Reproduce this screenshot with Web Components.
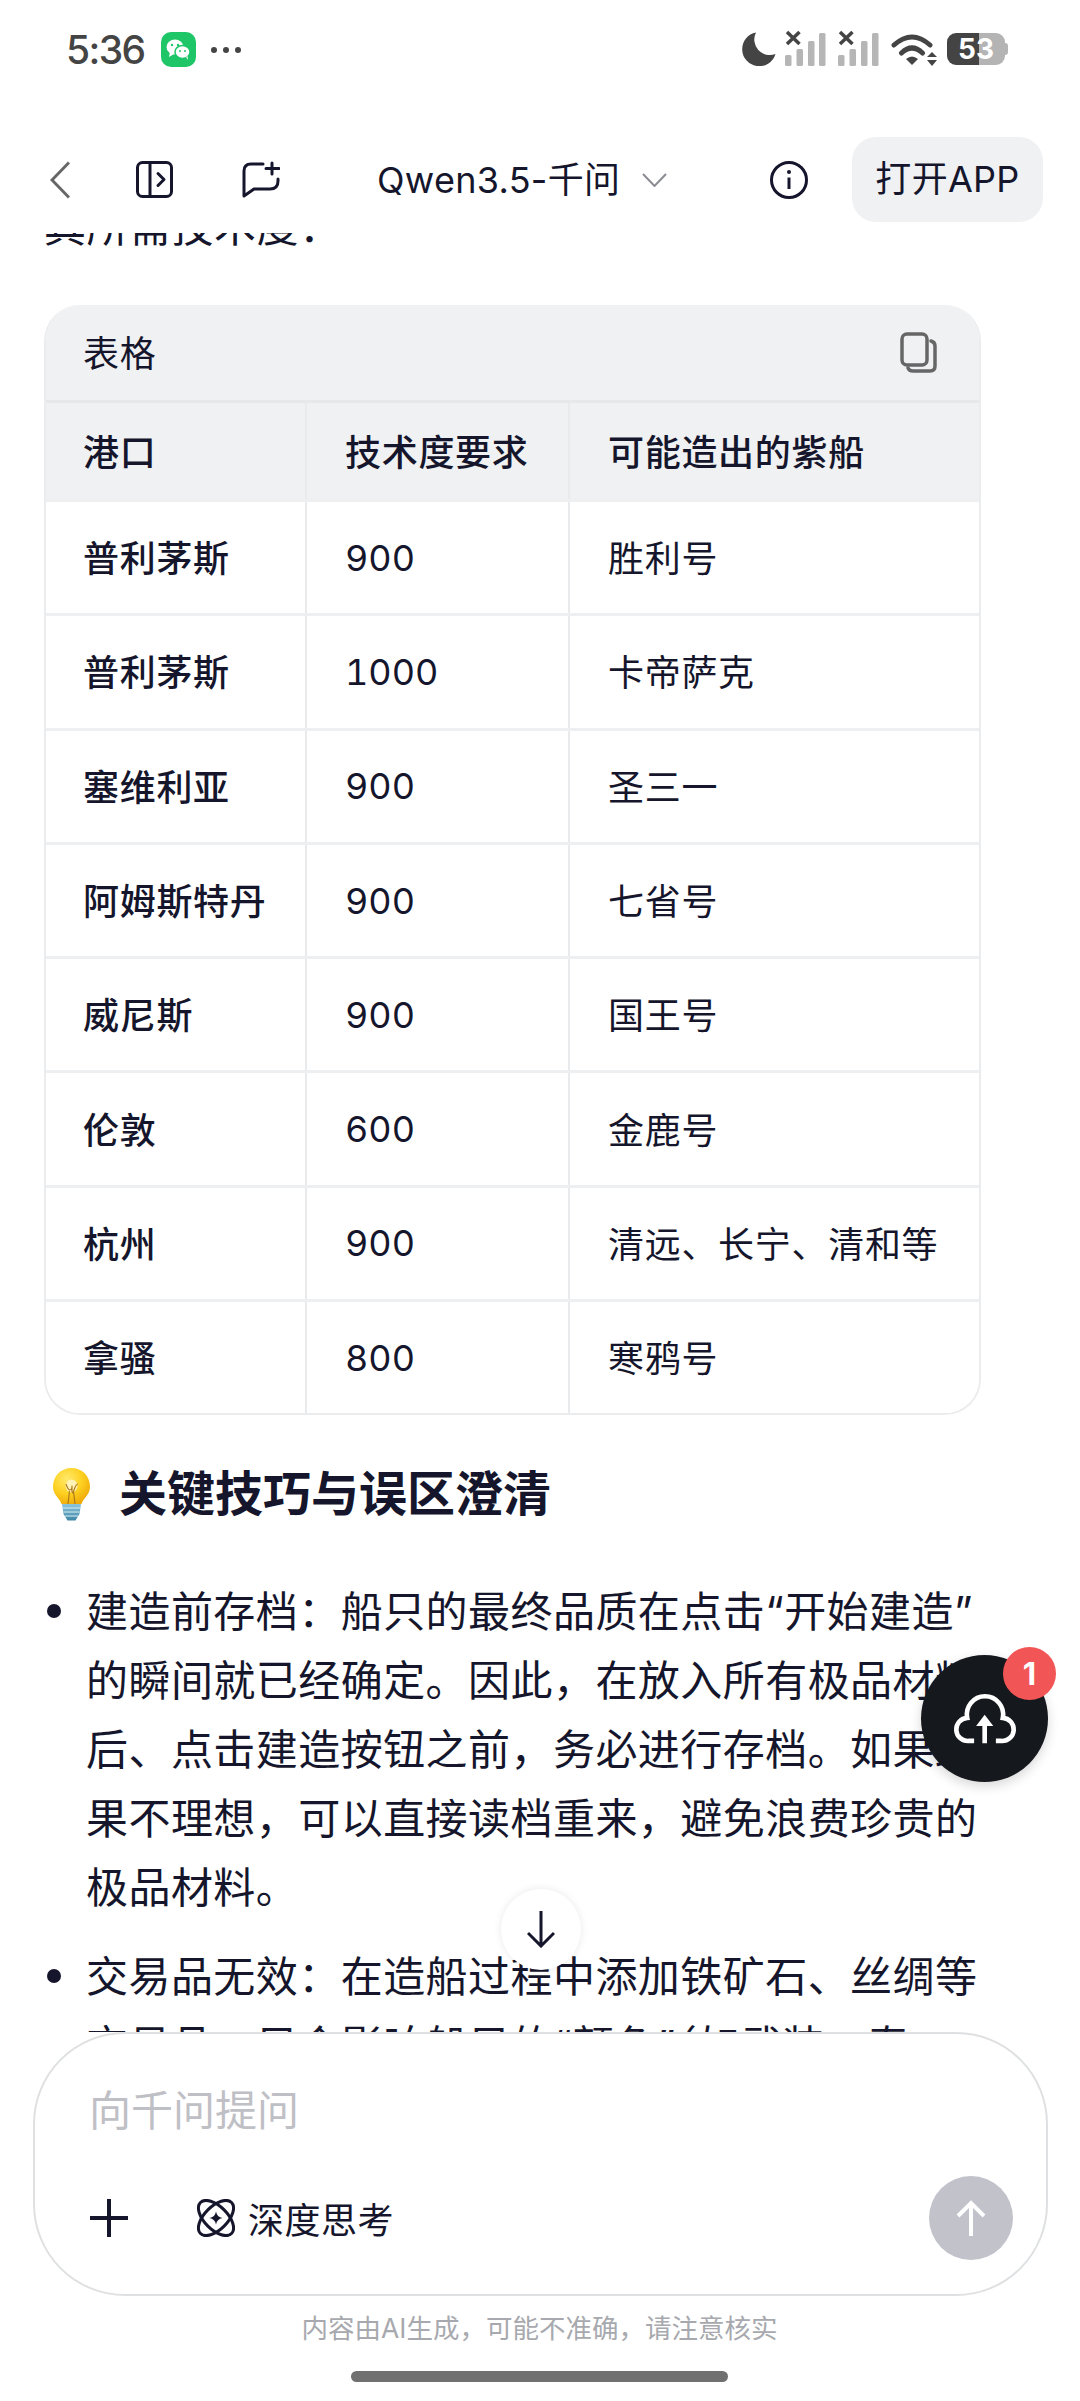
<!DOCTYPE html>
<html lang="zh-CN"><head><meta charset="utf-8"><title>Qwen3.5-千问</title>
<style>
html,body{margin:0;padding:0;background:#fff}
body{width:1080px;height:2401px;overflow:hidden;font-family:Inter,"Noto Sans CJK SC","Noto Sans",sans-serif;color:#15162c}
</style></head><body>
<app-shell>
  <status-bar></status-bar>
  <app-nav title-text="Qwen3.5-千问" action="打开APP"></app-nav>
  <chat-view>
    <chat-para>其所需技术度：</chat-para>
    <ship-table caption="表格">
      <ship-row head port="港口" tech="技术度要求" ship="可能造出的紫船"></ship-row>
      <ship-row port="普利茅斯" tech="900" ship="胜利号"></ship-row>
      <ship-row port="普利茅斯" tech="1000" ship="卡帝萨克"></ship-row>
      <ship-row port="塞维利亚" tech="900" ship="圣三一"></ship-row>
      <ship-row port="阿姆斯特丹" tech="900" ship="七省号"></ship-row>
      <ship-row port="威尼斯" tech="900" ship="国王号"></ship-row>
      <ship-row port="伦敦" tech="600" ship="金鹿号"></ship-row>
      <ship-row port="杭州" tech="900" ship="清远、长宁、清和等"></ship-row>
      <ship-row last port="拿骚" tech="800" ship="寒鸦号"></ship-row>
    </ship-table>
    <tip-heading>关键技巧与误区澄清</tip-heading>
    <tip-item>建造前存档：船只的最终品质在点击“开始建造”的瞬间就已经确定。因此，在放入所有极品材料后、点击建造按钮之前，务必进行存档。如果结果不理想，可以直接读档重来，避免浪费珍贵的极品材料。</tip-item>
    <tip-item>交易品无效：在造船过程中添加铁矿石、丝绸等交易品，只会影响船只的“颜色”（如武装、寿</tip-item>
  </chat-view>
  <composer-box placeholder="向千问提问" mode="深度思考" note="内容由AI生成，可能不准确，请注意核实"></composer-box>
  <scroll-down></scroll-down>
  <upload-fab count="1"></upload-fab>
</app-shell>
<script>
function el(name, html){
  customElements.define(name, class extends HTMLElement{
    connectedCallback(){
      if(this.shadowRoot) return;
      const a = n => this.getAttribute(n) ?? '';
      this.attachShadow({mode:'open'}).innerHTML = html(a, n => this.hasAttribute(n));
    }
  });
}
el('app-shell', () => `<style>:host{display:flex;flex-direction:column;position:relative;width:1080px;height:2401px;overflow:hidden;background:#fff}</style><slot></slot>`);

el('status-bar', () => `<style>
:host{display:flex;flex:none;height:100px;box-sizing:border-box;padding:30px 75px 0 66px;justify-content:space-between;align-items:flex-start}
.l,.r{display:flex;align-items:flex-start}
.t{font:500 39px/40px Inter,"Noto Sans",sans-serif;color:#444;height:40px;letter-spacing:-1.6px;width:80px}
.wx{margin:2px 0 0 15px;width:35px;height:35px;border-radius:10px;background:#1ec668;display:block}
.dots{margin:16px 0 0 14px;display:block}
svg{display:block}
.moon{margin:2px 0 0}.s1{margin:0 0 0 9px}.s2{margin:0 0 0 12px}.w{margin:4px 0 0 12px}
.bat{margin:3px 0 0 10px;position:relative;width:58px;height:32px;border-radius:9px;background:linear-gradient(90deg,#444 32px,#b4b4b4 32px);display:flex;align-items:center;justify-content:center;color:#fff;font:700 28px/32px Inter,sans-serif}
.bat i{position:absolute;left:58px;top:10px;width:3px;height:12px;border-radius:0 3px 3px 0;background:#b4b4b4}
</style>
<div class="l"><div class="t">5:36</div>
<svg class="wx" viewBox="0 0 35 35"><ellipse cx="14" cy="15" rx="8.500" ry="7.500" fill="#fff"/><path d="M9 20l-1 5 5-3z" fill="#fff"/><ellipse cx="21.500" cy="20" rx="7.500" ry="6.500" fill="#fff" stroke="#1ec668" stroke-width="1.500"/><path d="M25 25l2 3-.5-4z" fill="#fff"/><circle cx="11" cy="13" r="1.200" fill="#1ec668"/><circle cx="17" cy="13" r="1.200" fill="#1ec668"/><circle cx="19" cy="19" r="1" fill="#1ec668"/><circle cx="24" cy="19" r="1" fill="#1ec668"/></svg>
<svg class="dots" width="32" height="8" viewBox="0 0 32 8"><circle cx="4" cy="4" r="3" fill="#444"/><circle cx="16" cy="4" r="3" fill="#444"/><circle cx="28" cy="4" r="3" fill="#444"/></svg></div>
<div class="r">
<svg class="moon" width="34" height="34" viewBox="0 0 34 34"><path d="M14 .5A17 17 0 1 0 33.500 22 15.500 15.500 0 0 1 14 .5Z" fill="#444"/></svg>
${[1,2].map(i=>`<svg class="s${i}" width="41" height="36" viewBox="0 0 41 36"><path d="M1.500 1.500 14 13.500M14 1.500 1.500 13.500" transform="translate(.5 .5)" stroke="#444" stroke-width="3.500" fill="none"/><g fill="#b6b6b6"><rect x="0" y="25" width="6.500" height="11" rx="1.500"/><rect x="11.500" y="19" width="6.500" height="17" rx="1.500"/><rect x="23" y="11" width="6.500" height="25" rx="1.500"/><rect x="34" y="3" width="6.500" height="33" rx="1.500"/></g></svg>`).join('')}
<svg class="w" width="46" height="33" viewBox="0 0 46 33"><path d="M3 11Q21 -5 39 11M10.500 19Q21 9 31.500 19" fill="none" stroke="#444" stroke-width="5" stroke-linecap="round"/><path d="M15 25Q21 20 27 25L21 31Z" fill="#444"/><path d="M36 23 41 18 46 23ZM36 26H46L41 32Z" fill="#444"/></svg>
<div class="bat">53<i></i></div>
</div>`);

el('app-nav', a => `<style>
:host{display:flex;flex:none;height:133px;box-sizing:border-box;padding:37px 37px 0 50px;align-items:flex-start;color:#15162c;background:#fff;position:relative;z-index:1}
svg{display:block;fill:none;flex:none}
.c{display:flex;align-items:center;height:85px}
.title{font:400 36px/85px Inter,"Noto Sans CJK SC",sans-serif;margin-left:97px;padding-top:1px;white-space:nowrap;color:#15162c;letter-spacing:.3px}
.btn{margin-left:auto;width:191px;height:85px;border-radius:24px;background:#f0f1f3;font:400 36px/85px Inter,"Noto Sans CJK SC",sans-serif;text-align:center;color:#15162c;letter-spacing:.3px}
</style>
<div class="c"><svg width="20" height="38" viewBox="0 0 20 38"><path d="M19 1.500 2 19 19 36.500" stroke="#666" stroke-width="3"/></svg></div>
<div class="c" style="margin-left:66px"><svg width="37" height="37" viewBox="0 0 37 37"><rect x="1.500" y="1.500" width="34" height="34" rx="5" stroke="#15162c" stroke-width="3"/><path d="M14 2V35" stroke="#15162c" stroke-width="3"/><path d="M22 12.500l6 6-6 6" stroke="#15162c" stroke-width="3" stroke-linecap="round" stroke-linejoin="round"/></svg></div>
<div class="c" style="margin-left:69px"><svg width="38" height="37" viewBox="0 0 38 37"><path d="M21 3H9Q2 3 2 10V35L12 28H28Q36 28 36 20V18" stroke="#15162c" stroke-width="3" stroke-linecap="round" stroke-linejoin="round"/><path d="M30 2V13M24 7.500H37" stroke="#15162c" stroke-width="3" stroke-linecap="round"/></svg></div>
<div class="title">${a('title-text')}</div>
<div class="c" style="margin-left:22px"><svg width="25" height="14" viewBox="0 0 25 14"><path d="M1 1 12.500 13 24 1" stroke="#8b8c93" stroke-width="2"/></svg></div>
<div class="c" style="margin-left:103px"><svg width="38" height="38" viewBox="0 0 38 38"><circle cx="19" cy="19" r="17.500" stroke="#15162c" stroke-width="3"/><path d="M19 16.500V28" stroke="#15162c" stroke-width="3"/><circle cx="19" cy="11" r="2" fill="#15162c"/></svg></div>
<div class="btn">${a('action')}</div>`);

el('chat-view', () => `<style>:host{display:block;flex:none;height:1799px;overflow:hidden;box-sizing:border-box;padding:0 99px 0 44px}
.inner{margin-top:-41px}</style><div class="inner"><slot></slot></div>`);

el('chat-para', () => `<style>:host{display:block;font:400 42px/69px Inter,"Noto Sans CJK SC",sans-serif;letter-spacing:.5px;margin:0 0 44px}</style><slot></slot>`);

el('ship-table', a => `<style>
:host{display:block;box-sizing:border-box;width:937px;border:2px solid #ebecee;border-top:0;border-radius:36px;overflow:hidden;font-family:Inter,"Noto Sans CJK SC",sans-serif;letter-spacing:.7px}
.cap{display:flex;justify-content:space-between;align-items:center;height:98px;box-sizing:border-box;padding:0 42px 0 37px;background:#f0f1f3;font-size:36px;border-bottom:3px solid #e7e8ea}
.cap span{padding-bottom:3px}
svg{display:block}
</style>
<div class="cap"><span>${a('caption')}</span><svg width="37" height="41" viewBox="0 0 37 41" fill="none" stroke="#666" stroke-width="3.500"><rect x="2" y="2" width="25" height="31" rx="5"/><path d="M31 9Q35 10 35 14V34Q35 39 30 39H13Q9 39 8 36" stroke-linecap="round"/></svg></div>
<slot></slot>`);

el('ship-row', (a, has) => `<style>
:host{display:grid;grid-template-columns:258.500px 263px 1fr;font-size:36px;${has('head')?'background:#f0f1f3;height:99px;':`background:#fff;height:${has('last')?111:114.3}px;`}${has('last')?'':'border-bottom:3px solid #eeeff1;'}box-sizing:border-box}
div{display:flex;align-items:center;padding:0 0 3px 37px;white-space:nowrap;${has('head')?'font-weight:500;':''}}
.a{font-weight:500}
div+div{border-left:2px solid #e9eaec;padding-left:38.500px}
.n{${has('head')?'':'padding-bottom:0;letter-spacing:0;font-variant-numeric:tabular-nums;'}}
</style><div class="a">${a('port')}</div><div class="n">${a('tech')}</div><div>${a('ship')}</div>`);

el('tip-heading', () => `<style>
:host{display:flex;align-items:center;margin:44px 0 48px;height:70px;font:600 48px/70px Inter,"Noto Sans CJK SC",sans-serif}
svg{display:block;flex:none;margin:0 29px 0 9px}
</style>
<svg width="37" height="53" viewBox="0 0 37 53"><defs><radialGradient id="b" cx=".38" cy=".3" r=".75"><stop offset="0" stop-color="#ffe96a"/><stop offset=".55" stop-color="#fdd020"/><stop offset="1" stop-color="#eea908"/></radialGradient><linearGradient id="s" x1="0" x2="0" y1="0" y2="1"><stop offset="0" stop-color="#8cc5dd"/><stop offset="1" stop-color="#3f86a6"/></linearGradient></defs><path d="M18.500 0C8 0 0 8 0 18.500 0 27 6 29 8.500 36H28.500C31 29 37 27 37 18.500 37 8 29 0 18.500 0Z" fill="url(#b)"/><ellipse cx="18.500" cy="18" rx="6" ry="6.500" fill="#fff3b8"/><path d="M13 16q2 6 4 6t2-3 0 3 2 0 4-6M15 36 16.500 23M22 36 20.500 23" fill="none" stroke="#b07a1a" stroke-width="1.200"/><path d="M9 36H28L26.500 46 22.500 52.500H14.500L10.500 46Z" fill="url(#s)"/><path d="M10 40H27M10.500 44H26.500M12 48H25" stroke="#d7edf5" stroke-width="1"/></svg><slot></slot>`);

el('tip-item', () => `<style>
:host{display:block;position:relative;padding-left:42px;margin-bottom:20px;font:400 42px/69px Inter,"Noto Sans CJK SC",sans-serif;letter-spacing:.45px;width:893px}
i{position:absolute;left:3px;top:27px;width:14px;height:14px;border-radius:50%;background:#15162c}
</style><i></i><slot></slot>`);

el('composer-box', a => `<style>
:host{display:block;flex:none;box-sizing:border-box;padding:0 32px 0 33px;font-family:Inter,"Noto Sans CJK SC",sans-serif;background:#fff;position:relative}
.box{height:264px;box-sizing:border-box;border:2px solid #dfe0e2;border-radius:92px;padding:43px 33px 0 54px;background:#fff}
.ph{font-size:42px;line-height:68px;color:#bfc0c6}
.row{display:flex;align-items:center;margin-top:31px;height:84px}
.mode{font-size:36px;margin-left:13px;color:#15162c;letter-spacing:.5px}
svg{display:block;flex:none}
.send{margin-left:auto;width:84px;height:84px;border-radius:50%;background:#c1c2ca;display:flex;align-items:center;justify-content:center}
.note{text-align:center;font-size:26.500px;line-height:40px;color:#a7a9ae;margin-top:12px;padding-right:2px}
.bar{width:377px;height:11px;border-radius:6px;background:#707070;margin:23px 0 0 318px}
</style>
<div class="box"><div class="ph">${a('placeholder')}</div>
<div class="row"><svg width="40" height="40" viewBox="0 0 40 40"><path d="M20 1V39M1 20H39" stroke="#15162c" stroke-width="4"/></svg>
<svg style="margin-left:68px" width="38" height="38" viewBox="0 0 38 38" fill="none" stroke="#15162c" stroke-width="3"><ellipse cx="19" cy="19" rx="22" ry="11.500" transform="rotate(45 19 19)"/><ellipse cx="19" cy="19" rx="22" ry="11.500" transform="rotate(-45 19 19)"/><path d="M19 12.500Q20 18 25.500 19 20 20 19 25.500 18 20 12.500 19 18 18 19 12.500Z" fill="#15162c" stroke="none"/></svg>
<span class="mode">${a('mode')}</span>
<div class="send"><svg width="30" height="36" viewBox="0 0 30 36" fill="none" stroke="#fff" stroke-width="4"><path d="M15 36V3M2 16 15 3 28 16"/></svg></div></div></div>
<div class="note">${a('note')}</div>
<div class="bar"></div>`);

el('scroll-down', () => `<style>
:host{position:absolute;left:501px;top:1889px;width:80px;height:81px;border-radius:50%;background:#fff;box-shadow:0 0 8px rgba(0,0,0,.09);display:flex;align-items:center;justify-content:center}
svg{display:block}
</style><svg width="28" height="37" viewBox="0 0 28 37" fill="none" stroke="#15162c" stroke-width="3"><path d="M14 0V35M1 22 14 35 27 22"/></svg>`);

el('upload-fab', a => `<style>
:host{position:absolute;left:921px;top:1655px;width:127px;height:127px;border-radius:50%;background:#15181d;box-shadow:0 4px 12px rgba(0,0,0,.16);display:flex;align-items:center;justify-content:center}
svg{display:block}
b{position:absolute;left:82px;top:-8px;width:53px;height:53px;border-radius:50%;background:#f25555;color:#fff;font:700 31px/53px Inter,sans-serif;text-align:center}
</style><svg width="64" height="53" viewBox="158 155 194 160" fill="none" stroke="#fff" stroke-width="14"><path d="M222 303H205A35 35 0 0 1 201 233A55 55 0 1 1 309 233A35 35 0 0 1 305 303H288"/><path d="M254 245V310"/><path d="M228 258 254 224 280 258Z" fill="#fff" stroke="none"/></svg><b>${a('count')}</b>`);
</script>
</body></html>
